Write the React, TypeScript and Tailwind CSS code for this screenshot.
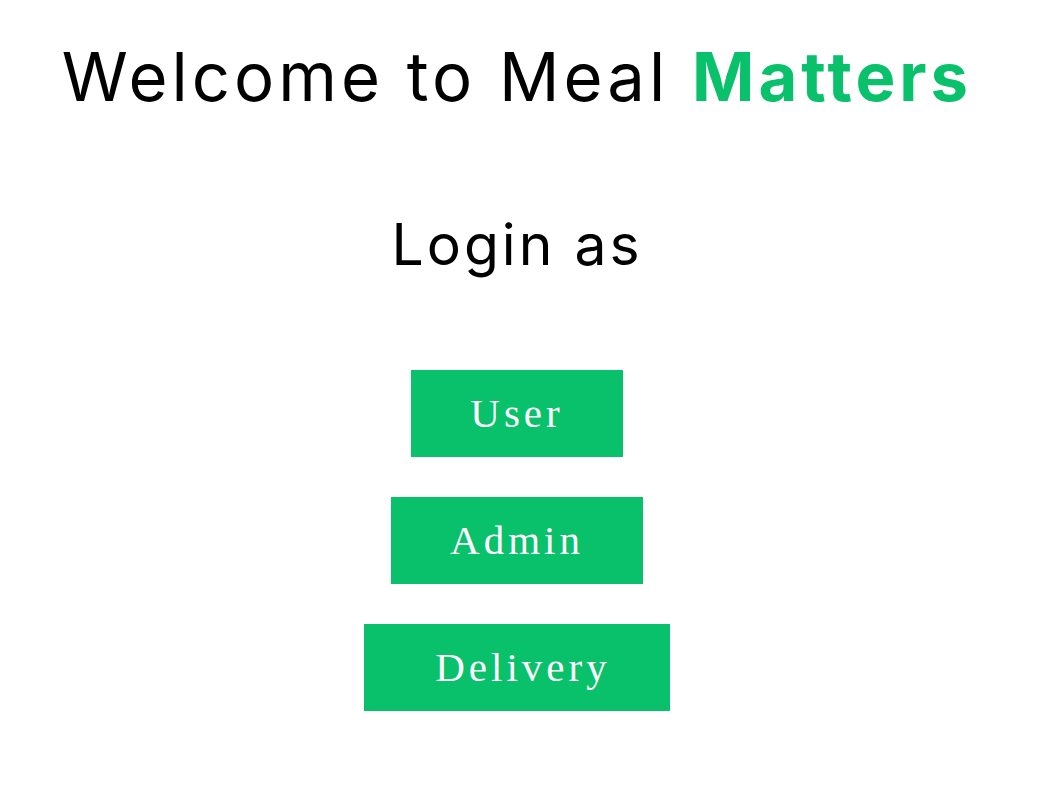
export default function App() {
  const roles = [
    { label: "User", cls: "w-[212px]" },
    { label: "Admin", cls: "w-[252px]" },
    { label: "Delivery", cls: "w-[306px] pl-[12px]" },
  ];

  return (
    <div className="min-h-screen bg-white w-[1034px]">
      <h1
        className="text-center text-[67px] tracking-[4px] leading-none pt-[43px] text-black"
        style={{ fontFamily: "Inter, sans-serif" }}
      >
        Welcome to Meal <span className="font-bold text-[#08c16a]">Matters</span>
      </h1>

      <h2
        className="text-center text-[57px] tracking-[3px] leading-none mt-[106px] text-black"
        style={{ fontFamily: "Inter, sans-serif" }}
      >
        Login as
      </h2>

      <div className="flex flex-col items-center gap-[40px] mt-[97px]">
        {roles.map((r) => (
          <button
            key={r.label}
            className={`bg-[#08c16a] text-white text-[41px] tracking-[4px] h-[87px] ${r.cls}`}
            style={{ fontFamily: '"Liberation Serif", serif' }}
          >
            {r.label}
          </button>
        ))}
      </div>
    </div>
  );
}
